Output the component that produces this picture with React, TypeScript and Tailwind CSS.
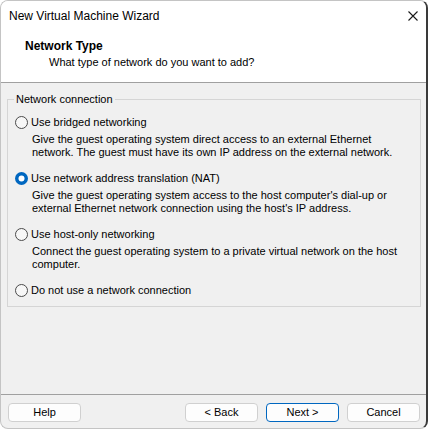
import React, { useState } from "react";

type Choice = {
  id: string;
  label: string;
  desc?: string[];
};

const choices: Choice[] = [
  {
    id: "bridged",
    label: "Use bridged networking",
    desc: [
      "Give the guest operating system direct access to an external Ethernet",
      "network. The guest must have its own IP address on the external network.",
    ],
  },
  {
    id: "nat",
    label: "Use network address translation (NAT)",
    desc: [
      "Give the guest operating system access to the host computer's dial-up or",
      "external Ethernet network connection using the host's IP address.",
    ],
  },
  {
    id: "hostonly",
    label: "Use host-only networking",
    desc: [
      "Connect the guest operating system to a private virtual network on the host",
      "computer.",
    ],
  },
  { id: "none", label: "Do not use a network connection" },
];

const Radio = ({ checked }: { checked: boolean }) =>
  checked ? (
    <svg width="13" height="13" viewBox="0 0 13 13" className="shrink-0">
      <circle cx="6.5" cy="6.5" r="6.5" fill="#0067c0" />
      <circle cx="6.5" cy="6.5" r="3" fill="#ffffff" />
    </svg>
  ) : (
    <svg width="13" height="13" viewBox="0 0 13 13" className="shrink-0">
      <circle cx="6.5" cy="6.5" r="6" fill="#f7f7f7" stroke="#4a4a4a" strokeWidth="1" />
    </svg>
  );

const Btn = ({ children, primary }: { children: React.ReactNode; primary?: boolean }) => (
  <button
    className={
      primary
        ? "w-[73px] h-[19px] rounded-[4px] border border-[#0067c0] bg-[#fdfdfd] text-[11px] leading-none text-black"
        : "w-[73px] h-[19px] rounded-[4px] border border-[#d0d0d0] bg-[#fdfdfd] text-[11px] leading-none text-black"
    }
  >
    {children}
  </button>
);

export default function App() {
  const [sel, setSel] = useState("nat");

  return (
    <div
      className="w-[428px] h-[430px] bg-white text-black"
      style={{ fontFamily: '"Segoe UI", "Liberation Sans", Arial, sans-serif' }}
    >
      <div className="w-[428px] h-[429px] flex flex-col overflow-hidden rounded-lg border border-[#c4c4c4] border-r-2 border-r-[#3a3a3a] bg-[#f0f0f0]">
        {/* header */}
        <div className="h-[82px] shrink-0 bg-white border-b border-[#a0a0a0]">
          <div className="h-[30px] flex items-center justify-between pl-[8px] pr-[8px]">
            <span className="text-[12px] leading-[15px]">New Virtual Machine Wizard</span>
            <svg width="10" height="10" viewBox="0 0 10 10">
              <path d="M0.5 0.5 L9.5 9.5 M9.5 0.5 L0.5 9.5" stroke="#1a1a1a" strokeWidth="1.1" />
            </svg>
          </div>
          <div className="pt-[8px] pl-[24px] text-[12px] leading-[15px] font-bold">Network Type</div>
          <div className="mt-[1px] pl-[48px] text-[11px] leading-[15px]">
            What type of network do you want to add?
          </div>
        </div>

        {/* body */}
        <div className="flex-1 pl-[6px] pr-[5px] pt-[9px] text-[11px]">
          <fieldset className="border border-[#d5d5d5] pl-[6px] pb-[8px]">
            <legend className="px-[2px] leading-[15px]">Network connection</legend>
            <div className="flex flex-col gap-[11px] mt-[7px]">
              {choices.map((c) => (
                <div key={c.id} className="flex flex-col" onClick={() => setSel(c.id)}>
                  <div className="h-[16px] flex items-center gap-[3px] ml-[1px]">
                    <Radio checked={sel === c.id} />
                    <span className="leading-[15px] whitespace-nowrap">{c.label}</span>
                  </div>
                  {c.desc && (
                    <div className="mt-[3px] pl-[18px] leading-[13px] whitespace-nowrap">
                      {c.desc.map((d) => (
                        <div key={d}>{d}</div>
                      ))}
                    </div>
                  )}
                </div>
              ))}
            </div>
          </fieldset>
        </div>

        {/* footer */}
        <div className="h-[34px] shrink-0 border-t border-[#a0a0a0] pt-[8px] pl-[7px] pr-[6px] flex items-start">
          <Btn>Help</Btn>
          <div className="ml-auto flex gap-[8px]">
            <Btn>&lt; Back</Btn>
            <Btn primary>Next &gt;</Btn>
            <Btn>Cancel</Btn>
          </div>
        </div>
      </div>
    </div>
  );
}
